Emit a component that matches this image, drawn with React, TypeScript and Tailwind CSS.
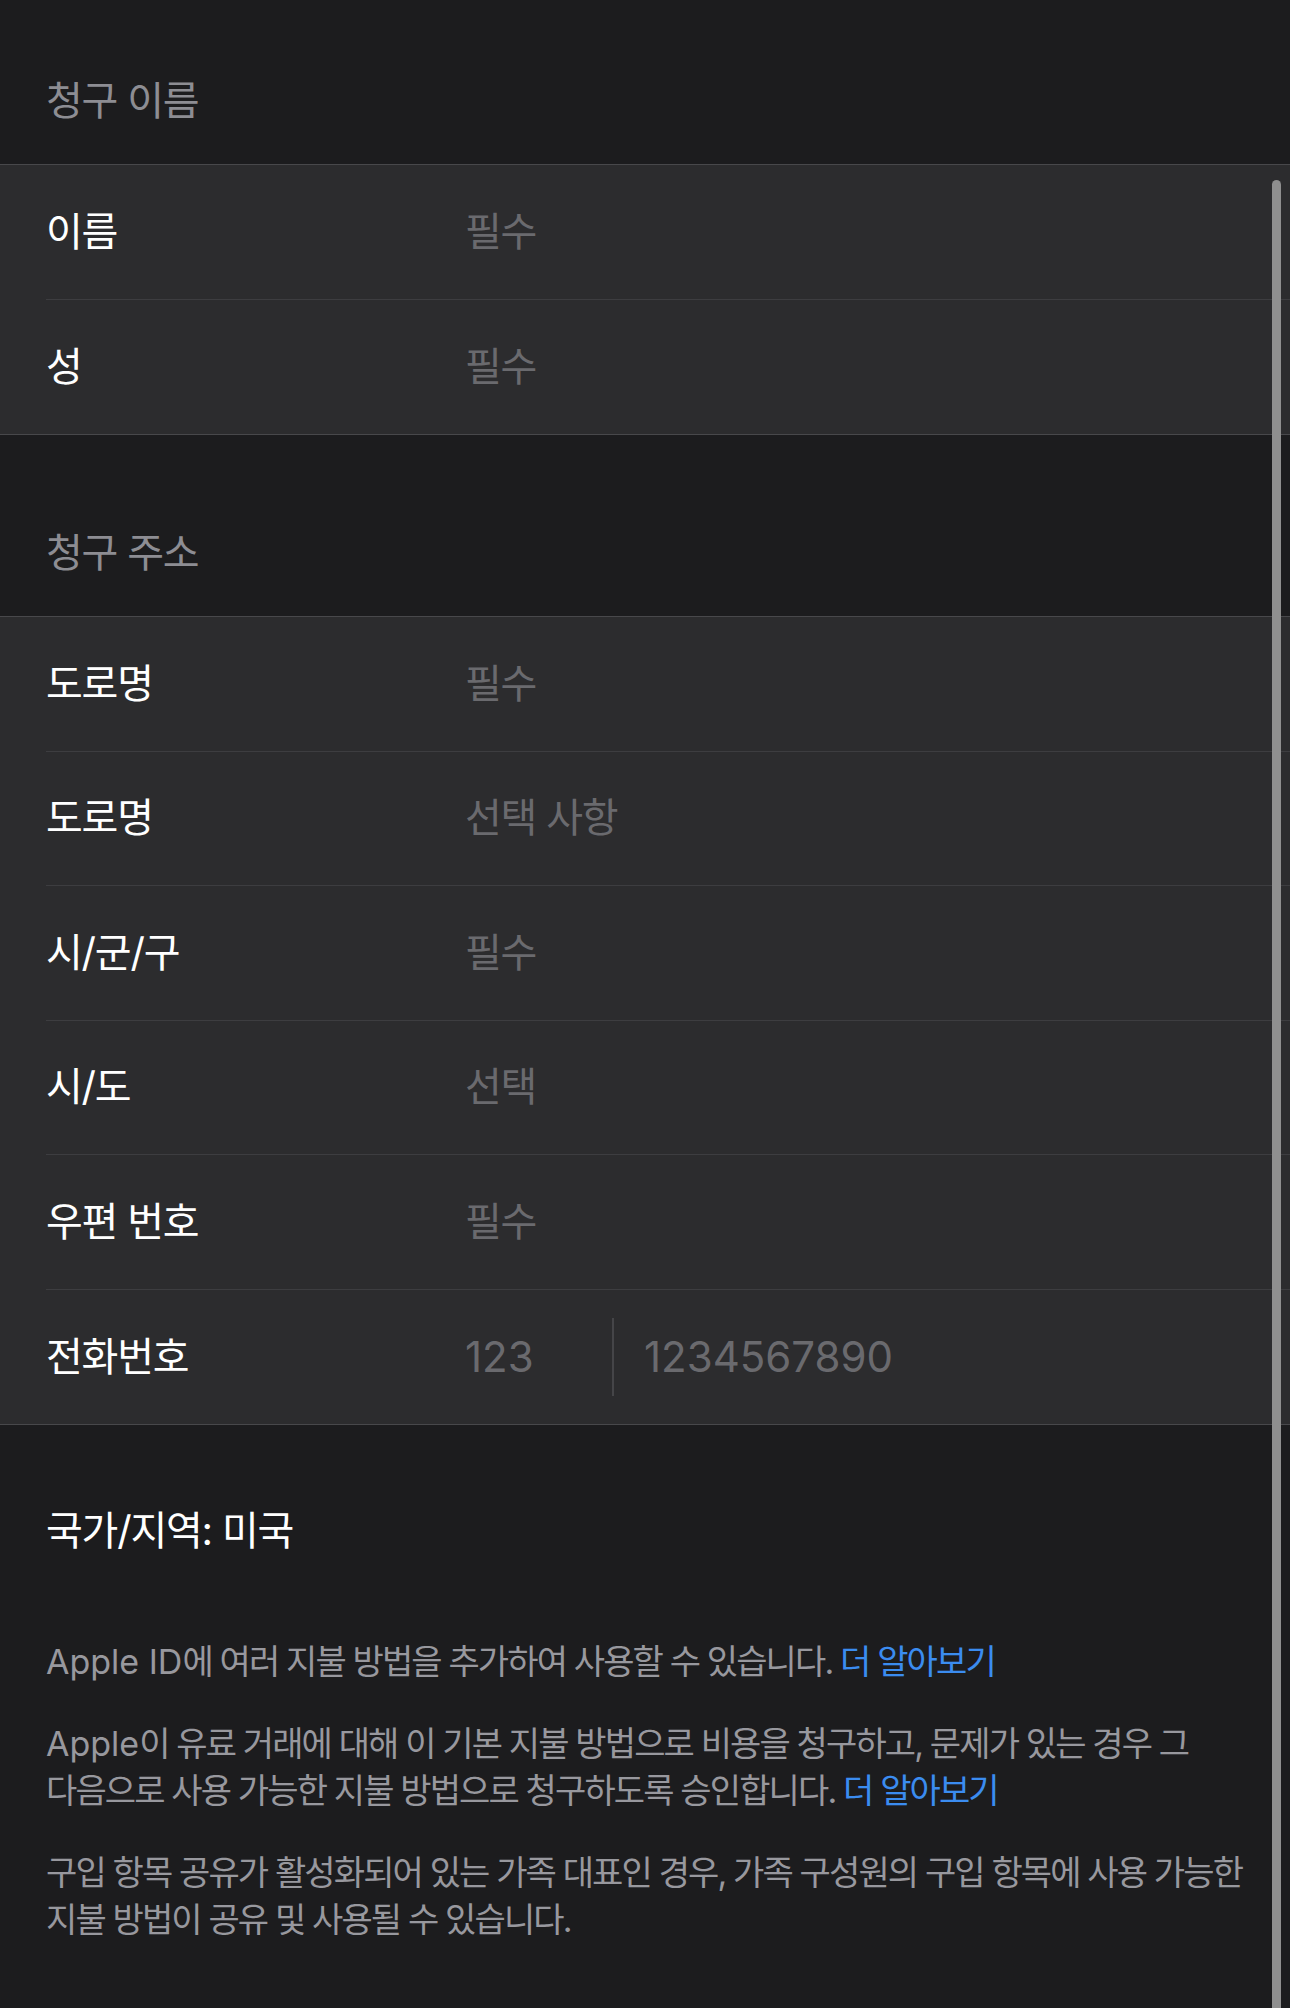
import type { ReactNode } from 'react'

const font = 'font-["Inter","Noto_Sans_CJK_KR",sans-serif]'

function SectionHeader({ children, top }: { children: ReactNode; top: string }) {
  return (
    <div className={`${top} px-[46px] pb-[40px]`}>
      <h2 className="text-[40px] leading-[47px] tracking-[-0.03em] text-[#8d8d93]">{children}</h2>
    </div>
  )
}

function Row({ label, value, last }: { label: string; value: ReactNode; last?: boolean }) {
  return (
    <div className="pl-[46px]">
      <div className={`flex h-[134.5px] items-center ${last ? '' : 'border-b border-[#3d3d40]'}`}>
        <span className="w-[419px] shrink-0 text-[40px] tracking-[-0.03em] text-white">{label}</span>
        {value}
      </div>
    </div>
  )
}

function Placeholder({ children }: { children: ReactNode }) {
  return <span className="text-[40px] tracking-[-0.03em] text-[#6a6a6e]">{children}</span>
}

function Section({ children }: { children: ReactNode }) {
  return <div className="border-y-[1.5px] border-[#48484b] bg-[#2c2c2e]">{children}</div>
}

function Link({ children }: { children: ReactNode }) {
  return <span className="text-[#3b8cf0]">{children}</span>
}

export default function App() {
  return (
    <div className={`relative min-h-[2008px] w-full overflow-hidden bg-[#1c1c1e] ${font}`}>
      <SectionHeader top="pt-[77px]">청구 이름</SectionHeader>
      <Section>
        <Row label="이름" value={<Placeholder>필수</Placeholder>} />
        <Row label="성" value={<Placeholder>필수</Placeholder>} last />
      </Section>

      <SectionHeader top="pt-[94px]">청구 주소</SectionHeader>
      <Section>
        <Row label="도로명" value={<Placeholder>필수</Placeholder>} />
        <Row label="도로명" value={<Placeholder>선택 사항</Placeholder>} />
        <Row label="시/군/구" value={<Placeholder>필수</Placeholder>} />
        <Row label="시/도" value={<Placeholder>선택</Placeholder>} />
        <Row label="우편 번호" value={<Placeholder>필수</Placeholder>} />
        <Row
          label="전화번호"
          last
          value={
            <div className="flex h-full items-center">
              <span className="w-[147px] text-[42px] text-[#6a6a6e]">123</span>
              <div className="h-[78px] w-[2px] bg-[#454548]" />
              <span className="pl-[30px] text-[42px] text-[#6a6a6e]">1234567890</span>
            </div>
          }
        />
      </Section>

      <div className="px-[46px] pt-[82px]">
        <p className="text-[40px] leading-[47px] tracking-[-0.03em] text-white">국가/지역: 미국</p>
        <div className="mt-[84px] flex w-[1215px] flex-col gap-[35px] break-keep text-[34px] leading-[47px] tracking-[-0.055em] text-[#98989e]">
          <p>
            <span className="tracking-normal">Apple ID</span>에 여러 지불 방법을 추가하여 사용할 수 있습니다.{' '}
            <Link>더 알아보기</Link>
          </p>
          <p>
            <span className="tracking-normal">Apple</span>이 유료 거래에 대해 이 기본 지불 방법으로 비용을 청구하고,
            문제가 있는 경우 그 다음으로 사용 가능한 지불 방법으로 청구하도록 승인합니다. <Link>더 알아보기</Link>
          </p>
          <p>
            구입 항목 공유가 활성화되어 있는 가족 대표인 경우, 가족 구성원의 구입 항목에 사용 가능한 지불 방법이 공유 및
            사용될 수 있습니다.
          </p>
        </div>
      </div>

      <div className="absolute bottom-0 right-[9px] top-[180px] w-[9px] rounded-t-full bg-[#8f8f8f]" />
    </div>
  )
}
